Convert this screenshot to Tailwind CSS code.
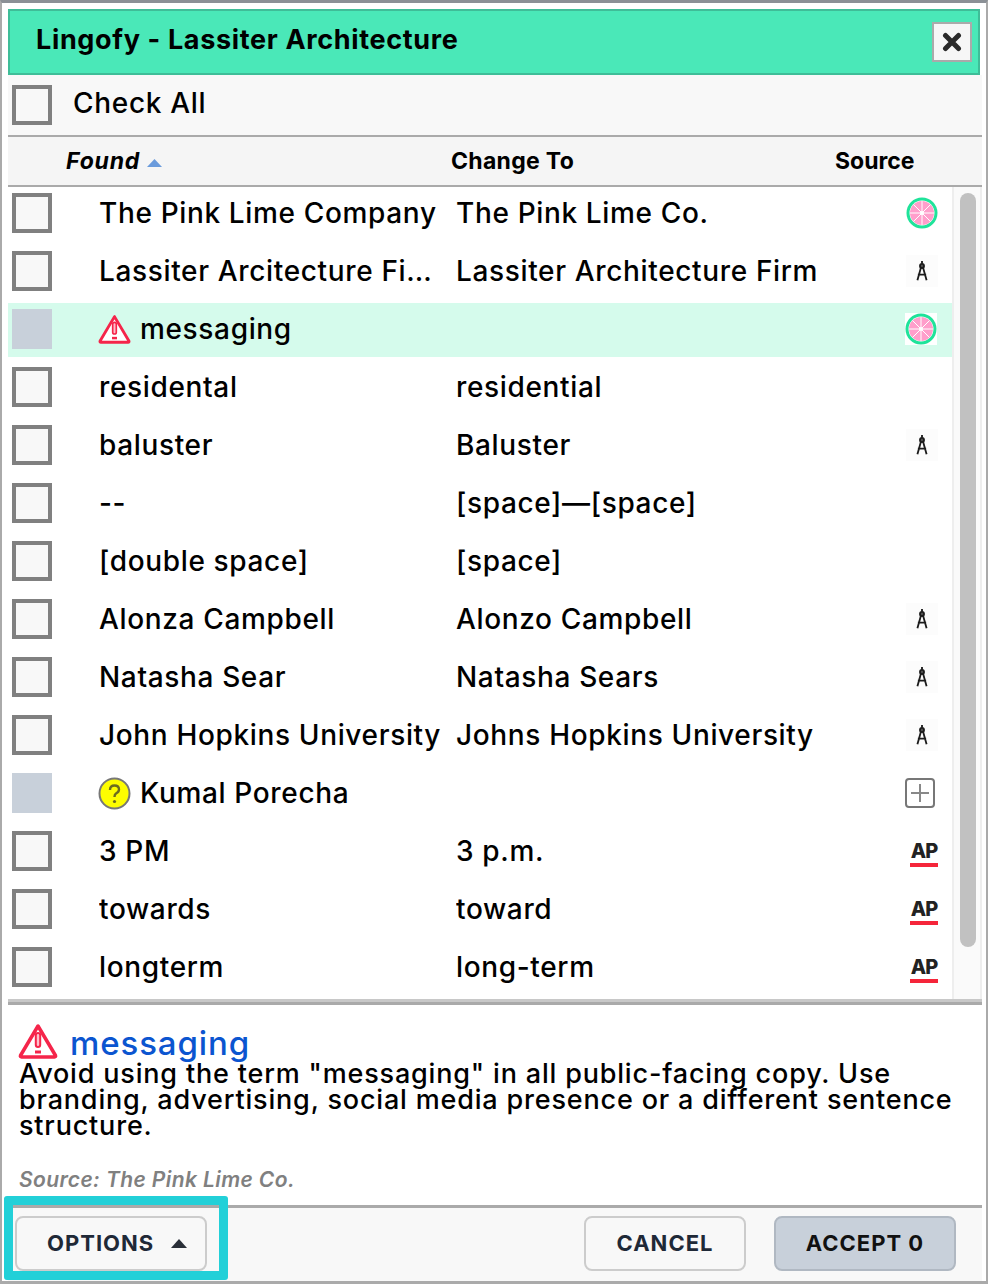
<!DOCTYPE html>
<html lang="en"><head><meta charset="utf-8"><title>Lingofy</title>
<script src="https://cdn.jsdelivr.net/npm/@tailwindcss/browser@4"></script></head>
<body class="m-0 bg-white">
<svg class="hidden" width="0" height="0">
<symbol id="lime" viewBox="0 0 32 32"><circle cx="16" cy="16" r="15.500" fill="#1fe39a"/><circle cx="16" cy="16" r="12.500" fill="#fff"/><circle cx="16" cy="16" r="12" fill="#ff9ecb"/><g stroke="#fff" stroke-width="1"><path d="M16 4v24M4 16h24M7.500 7.500l17 17M24.500 7.500l-17 17"/></g><circle cx="16" cy="16" r="2" fill="#fff"/></symbol>
<symbol id="compass" viewBox="0 0 16 24"><g fill="none" stroke="#1c1c1c" stroke-width="2"><circle cx="8" cy="6.500" r="2.200" fill="#555"/><path d="M8 1v3M6.800 8.500L3 22M9.200 8.500L13 22M3.500 16h9"/></g></symbol>
<symbol id="warn" viewBox="0 0 40 36"><path d="M20 3L2.500 32.500q-.5 1.500 1 1.500h33q1.500 0 1-1.500z" fill="#fff" stroke="#f5254a" stroke-width="3.500" stroke-linejoin="round"/><rect x="17.800" y="10" width="4.400" height="14" rx="2.200" fill="#ffc0cc" stroke="#f5254a" stroke-width="2"/><path d="M17 29h6" stroke="#f5254a" stroke-width="3"/></symbol>
</svg>
<div class="w-[988px] h-[1284px] relative overflow-hidden flex flex-col bg-white border-t-[3px] border-t-[#8b9096] border-l-2 border-l-[#aaaaaa] border-r-2 border-r-[#aaaaaa] border-b-[3px] border-b-[#aaaaaa] pl-[6px] pr-[4px] pt-[6px] text-black font-['Inter','Liberation_Sans',sans-serif]">
  <div class="h-[66px] shrink-0 mr-[2px] flex items-center justify-between bg-[#4ae8b8] border-2 border-[#3fbd98] pl-[26px] pr-[6px]">
    <span class="text-[27px] font-bold tracking-[0.65px] pb-[4px]">Lingofy - Lassiter Architecture</span>
    <button class="w-[40px] h-[40px] flex items-center justify-center bg-[#f6f6f6] border-[2px] border-[#aaaaaa]"><svg width="20" height="20" viewBox="0 0 20 20"><path d="M3.500 3.500L16.500 16.500M16.500 3.500L3.500 16.500" stroke="#2a2a2a" stroke-width="5" stroke-linecap="round"/></svg></button>
  </div>
  <div class="h-[60px] shrink-0 flex items-center bg-[#f8f8f8] pl-[4px]">
    <span class="w-[40px] h-[40px] border-[4px] border-[#808080] bg-[#f8f8f8] shrink-0"></span>
    <span class="ml-[21px] text-[28px] font-medium tracking-[0.7px] pb-[4px]">Check All</span>
  </div>
  <div class="h-[52px] shrink-0 flex items-center bg-[#f5f5f5] border-y-2 border-[#aaaaaa] text-[23px] font-bold">
    <span class="ml-[58px] italic w-[385px] flex items-center gap-[7px] tracking-[0.8px]">Found<svg class="mt-[3px]" width="15" height="8" viewBox="0 0 15 8"><path d="M7.500 0L15 8H0z" fill="#6a9bdc"/></svg></span>
    <span class="w-[384px] tracking-[0.3px]">Change To</span>
    <span>Source</span>
  </div>
  <div class="flex h-[812px] shrink-0">
    <div class="w-[944px] flex flex-col gap-[4px] text-[28px] font-medium tracking-[0.65px] overflow-hidden">
      <div class="h-[54px] pb-[2px] shrink-0 flex items-center"><span class="ml-[4px] w-[40px] h-[40px] border-[4px] border-[#808080] bg-[#f8f8f8] shrink-0"></span><span class="ml-[47px] w-[357px] truncate">The Pink Lime Company</span><span class="w-[441px] truncate">The Pink Lime Co.</span><span class="w-[32px] h-[32px] ml-[9px] flex items-center justify-center"><svg class="w-[32px] h-[32px]"><use href="#lime"/></svg></span></div>
      <div class="h-[54px] pb-[2px] shrink-0 flex items-center"><span class="ml-[4px] w-[40px] h-[40px] border-[4px] border-[#808080] bg-[#f8f8f8] shrink-0"></span><span class="ml-[47px] w-[357px] pr-[24px] truncate">Lassiter Arcitecture Firm</span><span class="w-[441px] truncate">Lassiter Architecture Firm</span><span class="w-[32px] h-[32px] ml-[9px] bg-[#fcfcfc] flex items-center justify-center"><svg class="w-[16px] h-[22px]"><use href="#compass"/></svg></span></div>
      <div class="h-[54px] pb-[2px] shrink-0 flex items-center bg-[#d5fbec]"><span class="ml-[4px] w-[40px] h-[40px] bg-[#c8d0da] shrink-0"></span><svg class="ml-[46px] w-[33px] h-[30px] shrink-0"><use href="#warn"/></svg><span class="ml-[9px] w-[315px] truncate">messaging</span><span class="w-[441px]"></span><span class="w-[32px] h-[32px] ml-[9px] bg-white flex items-center justify-center"><svg class="w-[32px] h-[32px]"><use href="#lime"/></svg></span></div>
      <div class="h-[54px] pb-[2px] shrink-0 flex items-center"><span class="ml-[4px] w-[40px] h-[40px] border-[4px] border-[#808080] bg-[#f8f8f8] shrink-0"></span><span class="ml-[47px] w-[357px] truncate">residental</span><span class="w-[441px] truncate">residential</span></div>
      <div class="h-[54px] pb-[2px] shrink-0 flex items-center"><span class="ml-[4px] w-[40px] h-[40px] border-[4px] border-[#808080] bg-[#f8f8f8] shrink-0"></span><span class="ml-[47px] w-[357px] truncate">baluster</span><span class="w-[441px] truncate">Baluster</span><span class="w-[32px] h-[32px] ml-[9px] bg-[#fcfcfc] flex items-center justify-center"><svg class="w-[16px] h-[22px]"><use href="#compass"/></svg></span></div>
      <div class="h-[54px] pb-[2px] shrink-0 flex items-center"><span class="ml-[4px] w-[40px] h-[40px] border-[4px] border-[#808080] bg-[#f8f8f8] shrink-0"></span><span class="ml-[47px] w-[357px] truncate">--</span><span class="w-[441px] truncate">[space]—[space]</span></div>
      <div class="h-[54px] pb-[2px] shrink-0 flex items-center"><span class="ml-[4px] w-[40px] h-[40px] border-[4px] border-[#808080] bg-[#f8f8f8] shrink-0"></span><span class="ml-[47px] w-[357px] truncate">[double space]</span><span class="w-[441px] truncate">[space]</span></div>
      <div class="h-[54px] pb-[2px] shrink-0 flex items-center"><span class="ml-[4px] w-[40px] h-[40px] border-[4px] border-[#808080] bg-[#f8f8f8] shrink-0"></span><span class="ml-[47px] w-[357px] truncate">Alonza Campbell</span><span class="w-[441px] truncate">Alonzo Campbell</span><span class="w-[32px] h-[32px] ml-[9px] bg-[#fcfcfc] flex items-center justify-center"><svg class="w-[16px] h-[22px]"><use href="#compass"/></svg></span></div>
      <div class="h-[54px] pb-[2px] shrink-0 flex items-center"><span class="ml-[4px] w-[40px] h-[40px] border-[4px] border-[#808080] bg-[#f8f8f8] shrink-0"></span><span class="ml-[47px] w-[357px] truncate">Natasha Sear</span><span class="w-[441px] truncate">Natasha Sears</span><span class="w-[32px] h-[32px] ml-[9px] bg-[#fcfcfc] flex items-center justify-center"><svg class="w-[16px] h-[22px]"><use href="#compass"/></svg></span></div>
      <div class="h-[54px] pb-[2px] shrink-0 flex items-center"><span class="ml-[4px] w-[40px] h-[40px] border-[4px] border-[#808080] bg-[#f8f8f8] shrink-0"></span><span class="ml-[47px] w-[357px] truncate">John Hopkins University</span><span class="w-[441px] truncate">Johns Hopkins University</span><span class="w-[32px] h-[32px] ml-[9px] bg-[#fcfcfc] flex items-center justify-center"><svg class="w-[16px] h-[22px]"><use href="#compass"/></svg></span></div>
      <div class="h-[54px] pb-[2px] shrink-0 flex items-center"><span class="ml-[4px] w-[40px] h-[40px] bg-[#c8d0da] shrink-0"></span><svg class="ml-[46px] w-[33px] h-[33px] shrink-0" viewBox="0 0 33 33"><circle cx="16.500" cy="16.500" r="15" fill="#fdfd00" stroke="#777" stroke-width="2"/><path d="M12 13q0-4.500 4.500-4.500t4.500 4q0 2.500-3 4q-1.500 1-1.500 3.500" fill="none" stroke="#6b6b20" stroke-width="2.400"/><circle cx="16.500" cy="24.500" r="1.600" fill="#6b6b20"/></svg><span class="ml-[9px] w-[315px] truncate">Kumal Porecha</span><span class="w-[441px]"></span><span class="w-[32px] h-[32px] ml-[8px] flex items-center justify-center"><svg class="w-[30px] h-[30px]" viewBox="0 0 30 30"><rect x="1" y="1" width="28" height="28" rx="3" fill="none" stroke="#777" stroke-width="2"/><path d="M15 6v18M6 15h18" stroke="#888" stroke-width="2"/></svg></span></div>
      <div class="h-[54px] pb-[2px] shrink-0 flex items-center"><span class="ml-[4px] w-[40px] h-[40px] border-[4px] border-[#808080] bg-[#f8f8f8] shrink-0"></span><span class="ml-[47px] w-[357px] truncate">3 PM</span><span class="w-[441px] truncate">3 p.m.</span><span class="w-[32px] h-[32px] ml-[11px] flex flex-col items-center justify-end"><span class="text-[20px] leading-[20px] font-extrabold tracking-[-1px] text-[#222]">AP</span><span class="block w-[28px] h-[4px] bg-[#f5253a] mt-[2px]"></span></span></div>
      <div class="h-[54px] pb-[2px] shrink-0 flex items-center"><span class="ml-[4px] w-[40px] h-[40px] border-[4px] border-[#808080] bg-[#f8f8f8] shrink-0"></span><span class="ml-[47px] w-[357px] truncate">towards</span><span class="w-[441px] truncate">toward</span><span class="w-[32px] h-[32px] ml-[11px] flex flex-col items-center justify-end"><span class="text-[20px] leading-[20px] font-extrabold tracking-[-1px] text-[#222]">AP</span><span class="block w-[28px] h-[4px] bg-[#f5253a] mt-[2px]"></span></span></div>
      <div class="h-[54px] pb-[2px] shrink-0 flex items-center"><span class="ml-[4px] w-[40px] h-[40px] border-[4px] border-[#808080] bg-[#f8f8f8] shrink-0"></span><span class="ml-[47px] w-[357px] truncate">longterm</span><span class="w-[441px] truncate">long-term</span><span class="w-[32px] h-[32px] ml-[11px] flex flex-col items-center justify-end"><span class="text-[20px] leading-[20px] font-extrabold tracking-[-1px] text-[#222]">AP</span><span class="block w-[28px] h-[4px] bg-[#f5253a] mt-[2px]"></span></span></div>
    </div>
    <div class="w-[30px] shrink-0 bg-[#fafafa] border-x-2 border-[#eeeeee] pl-[6px] pt-[6px]"><div class="w-[16px] h-[754px] rounded-full bg-[#c1c1c1]"></div></div>
  </div>
  <div class="h-[6px] shrink-0 bg-[#c8c8c8] border-b-[3px] border-[#aaaaaa]"></div>
  <div class="h-[200px] shrink-0 pl-[11px] pt-[18px] flex flex-col">
    <div class="flex items-center h-[38px]"><svg class="w-[40px] h-[36px] -mt-[3px] -ml-[1px]"><use href="#warn"/></svg><span class="ml-[12px] mt-[2px] text-[33px] font-medium tracking-[0.9px] text-[#0b55d0] leading-[38px]">messaging</span></div>
    <p class="text-[27px] font-medium tracking-[0.82px] leading-[26px]">Avoid using the term "messaging" in all public-facing copy. Use<br>branding, advertising, social media presence or a different sentence<br>structure.</p>
    <p class="mt-[28px] text-[21px] font-semibold italic tracking-[0.4px] text-[#808080] leading-[26px]">Source: The Pink Lime Co.</p>
  </div>
  <div class="h-[76px] pb-[2px] shrink-0 bg-[#f8f8f8] border-t-[3px] border-[#aaaaaa] flex items-center text-[22px] font-bold tracking-[1px] text-[#1f2937]">
    <button class="ml-[7px] w-[192px] h-[55px] rounded-lg border-2 border-[#cccccc] flex items-center pl-[30px] gap-[17px]">OPTIONS<svg width="16" height="9" viewBox="0 0 16 9"><path d="M8 0l8 9H0z" fill="#2a2f38"/></svg></button>
    <button class="ml-auto w-[162px] h-[55px] rounded-lg border-2 border-[#cccccc]">CANCEL</button>
    <button class="ml-[28px] mr-[26px] w-[182px] h-[55px] rounded-lg border-2 border-[#b0b8c2] bg-[#c8d0da] text-[#111]">ACCEPT 0</button>
  </div>
  <div class="absolute left-[2px] top-[1193px] w-[224px] h-[84px] rounded-[3px] border-[9px] border-[#22d0d8] pointer-events-none"></div>
</div>
</body></html>
